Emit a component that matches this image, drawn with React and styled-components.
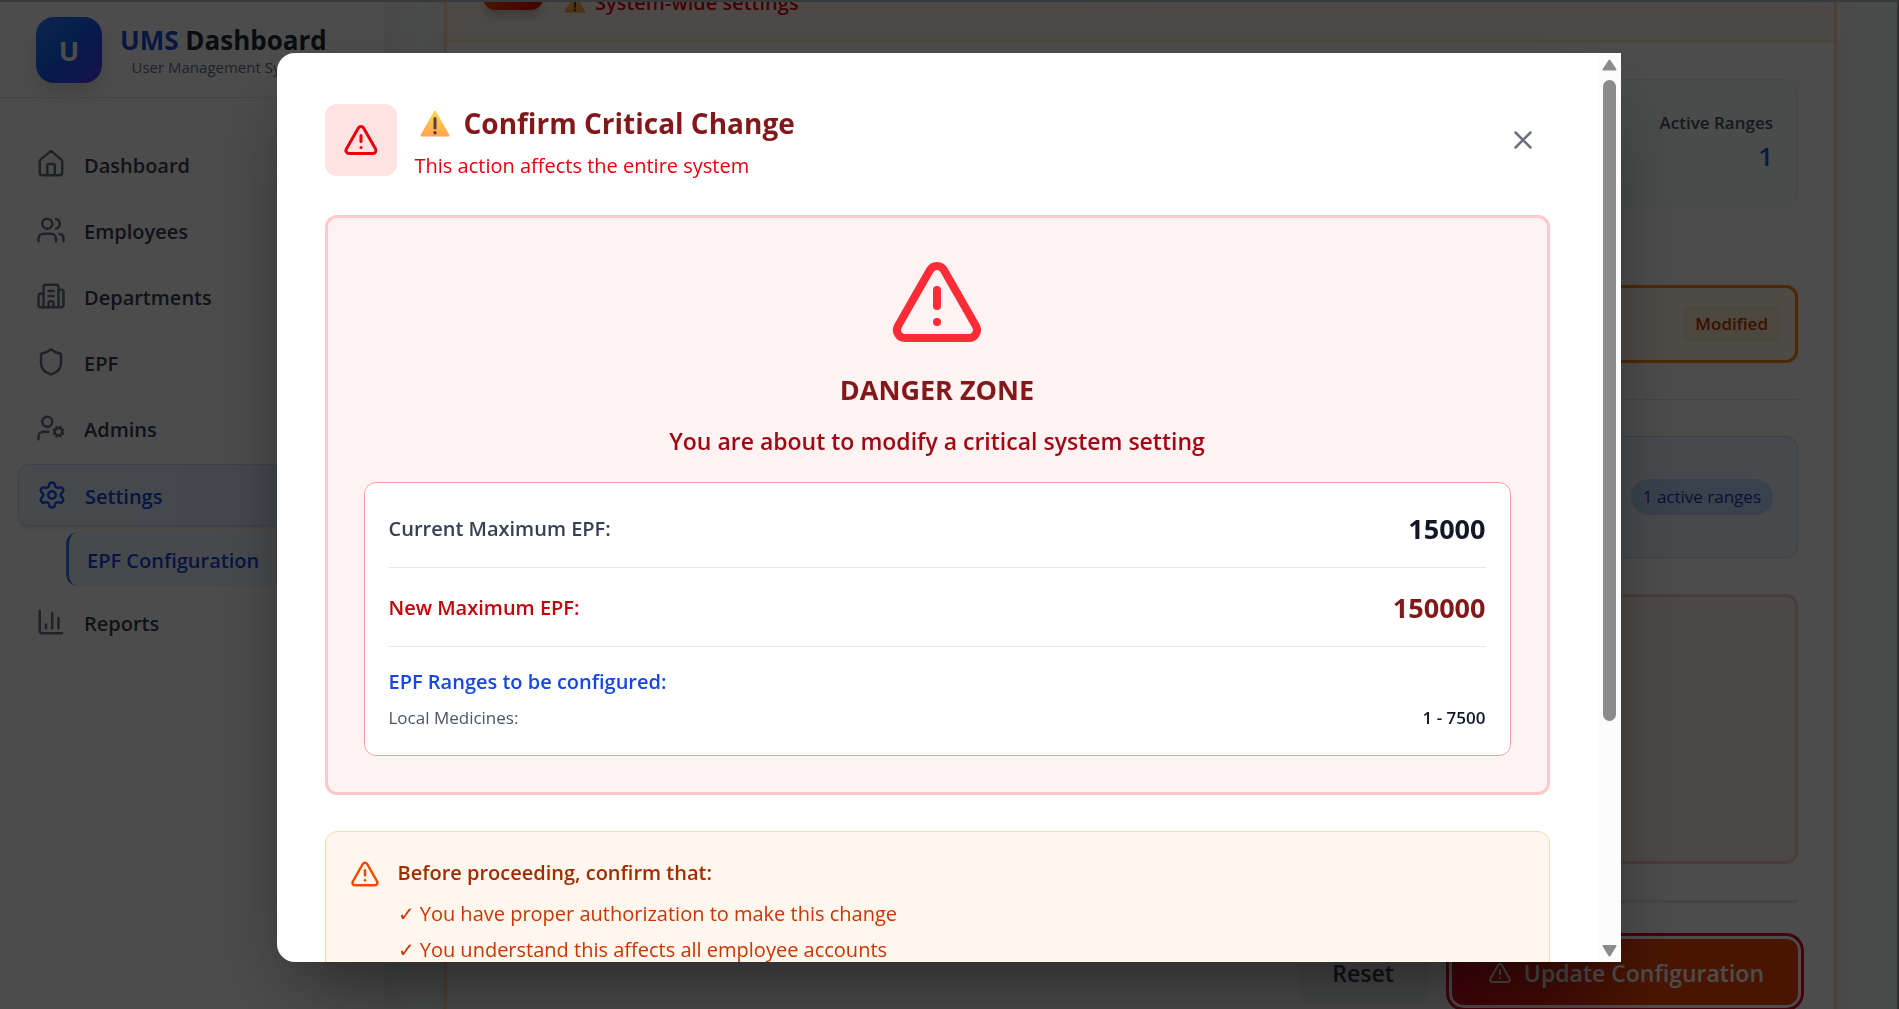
import React from "react";
import styled, { createGlobalStyle } from "styled-components";
import {
  House, Users, Building2, Shield, UserCog, Settings, ChartColumn, TriangleAlert, X,
} from "lucide-react";

const GlobalStyle = createGlobalStyle`
  *, *::before, *::after { box-sizing: border-box; }
  html, body, #root { height: 100%; }
  body { margin: 0; overflow: hidden; font-family: "Open Sans", "Noto Sans", sans-serif; color: #101828; }
  h1, h2, h3, p, ul, dl, dd { margin: 0; padding: 0; }
  button { font: inherit; border: 0; cursor: pointer; }
`;

const Page = styled.div`
  display: flex;
  height: 100vh;
  overflow: hidden;
  border-top: 2px solid #b9bfc6;
  border-right: 2px solid #a0a0a0;
  background: #f8fafc;
`;

const Sidebar = styled.aside`
  flex: 0 0 385px;
  background: #ffffff;
  border-right: 1px solid #eef1f5;
  box-shadow: 0 0 36px rgba(0, 0, 0, 0.08);
`;

const Brand = styled.header`
  display: flex;
  align-items: center;
  gap: 18px;
  height: 96px;
  padding: 0 36px 0;
  border-bottom: 1px solid #e2e8f0;
`;

const Logo = styled.div`
  display: grid;
  place-items: center;
  width: 66px;
  height: 66px;
  padding-top: 2px;
  border-radius: 18px;
  background: linear-gradient(135deg, #2b7fff, #155dfc 50%, #4f39f6);
  box-shadow: 0 12px 20px rgba(0, 0, 0, 0.12);
  color: #ffffff;
  font-size: 27px;
  font-weight: 700;
`;

const BrandText = styled.div`
  padding-top: 4px;
  text-align: center;
`;

const BrandName = styled.h1`
  font-size: 26px;
  line-height: 30px;
  font-weight: 700;
  color: #1e293b;
`;

const BrandAccent = styled.span`
  color: #1d4ed8;
`;

const BrandSub = styled.p`
  font-size: 15px;
  line-height: 24px;
  color: #62748e;
`;

const Nav = styled.nav`
  display: flex;
  flex-direction: column;
  gap: 6px;
  padding: 36px 18px;
`;

const NavLink = styled.a`
  display: flex;
  align-items: center;
  gap: 18px;
  height: ${(p) => (p.$active ? 62 : 60)}px;
  padding: 0 18px;
  border-radius: 12px;
  border: ${(p) => (p.$active ? "1px solid #bedbff" : "0")};
  background: ${(p) => (p.$active ? "linear-gradient(90deg, #eff6ff, #dbeafe)" : "none")};
  box-shadow: ${(p) => (p.$active ? "0 2px 4px rgba(0, 0, 0, 0.12)" : "none")};
  color: ${(p) => (p.$active ? "#1447e6" : "#364153")};
  font-size: 20px;
  font-weight: 600;
  text-decoration: none;

  svg {
    color: ${(p) => (p.$active ? "#155dfc" : "#6a7282")};
  }
`;

const NavLabel = styled.span`
  padding-top: 2px;
`;

const SubLink = styled.a`
  display: flex;
  align-items: center;
  height: 54px;
  margin-left: 48px;
  padding: 2px 18px 0;
  border-left: 3px solid #2b7fff;
  border-radius: 12px;
  background: #eff6ff;
  color: #1447e6;
  font-size: 20px;
  font-weight: 600;
  text-decoration: none;
`;

const Main = styled.main`
  flex: 1;
  padding: 0 60px 0 59px;
`;

const Card = styled.section`
  height: 1200px;
  border: solid #ffd6a7;
  border-width: 0 3px;
  background: #ffffff;
  box-shadow: 0 0 24px rgba(0, 0, 0, 0.05);
`;

const CardHead = styled.header`
  display: flex;
  align-items: flex-end;
  gap: 21px;
  height: 41px;
  padding: 0 36px 22px;
  border-bottom: 3px solid #fdecc4;
  background: linear-gradient(90deg, #fff7ed, #fef2f2);
`;

const HeadTile = styled.div`
  width: 60px;
  height: 14px;
  margin-bottom: 8px;
  border-radius: 0 0 12px 12px;
  background: linear-gradient(90deg, #f54900, #e7000b);
  box-shadow: 0 6px 10px rgba(0, 0, 0, 0.2);
`;

const HeadNote = styled.p`
  display: flex;
  align-items: center;
  gap: 9px;
  color: #e7000b;
  font-size: 20px;
  line-height: 30px;
  font-weight: 600;
`;

const CardBody = styled.div`
  display: flex;
  flex-direction: column;
  padding: 36px;
`;

const Stats = styled.div`
  display: flex;
  flex-direction: column;
  align-items: flex-end;
  height: 128px;
  padding: 28px 24px;
  border: 1px solid #e9eef0;
  border-radius: 12px;
  background: #f8fdfb;
`;

const StatLabel = styled.span`
  font-size: 17px;
  line-height: 30px;
  font-weight: 600;
  color: #4a5565;
`;

const StatValue = styled.strong`
  font-size: 26px;
  line-height: 36px;
  font-weight: 600;
  color: #155dfc;
`;

const ModifiedField = styled.div`
  display: flex;
  align-items: center;
  justify-content: flex-end;
  height: 78px;
  margin-top: 78px;
  padding: 0 15px;
  border: 3px solid #ff8904;
  border-radius: 12px;
  background: #fffbeb;
`;

const Badge = styled.span`
  padding: 0 12px;
  border-radius: 6px;
  background: #ffedd4;
  color: #ca3500;
  font-size: 17px;
  line-height: 36px;
  font-weight: 600;
`;

const Divider = styled.hr`
  width: 100%;
  height: ${(p) => p.$size}px;
  margin: 36px 0;
  border: 0;
  background: ${(p) => (p.$size > 1 ? "#e2e8f0" : "#e5e7eb")};
`;

const RangesPanel = styled.div`
  display: flex;
  justify-content: flex-end;
  height: 122px;
  padding: 42px 24px;
  border: 1px solid #bedbff;
  border-radius: 12px;
  background: #f0f5ff;
`;

const Pill = styled.span`
  height: 36px;
  padding: 0 12px;
  border-radius: 18px;
  background: #bedbff;
  color: #193cb8;
  font-size: 17px;
  line-height: 36px;
`;

const DangerPanel = styled.div`
  height: 270px;
  margin-top: 36px;
  border: 3px solid #ffc9c9;
  border-radius: 12px;
  background: #fef2f2;
`;

const Actions = styled.div`
  display: flex;
  justify-content: flex-end;
  gap: 24px;
`;

const ResetButton = styled.button`
  height: 66px;
  padding: 2px 34px 0;
  border-radius: 12px;
  background: #f3f4f6;
  color: #364153;
  font-size: 23px;
  font-weight: 600;
`;

const UpdateButton = styled.button`
  display: flex;
  align-items: center;
  gap: 12px;
  height: 66px;
  padding: 2px 34px 0 36px;
  border-radius: 12px;
  background: linear-gradient(90deg, #d90a24, #f54900 60%);
  box-shadow: 0 0 0 3px #ffffff, 0 0 0 6px #e7002b;
  color: #ffffff;
  font-size: 23px;
  font-weight: 600;
`;

const Overlay = styled.div`
  position: fixed;
  inset: 0;
  display: flex;
  justify-content: center;
  padding: 53px 26px 47px 24px;
  background: rgba(0, 0, 0, 0.7);
`;

const Dialog = styled.div`
  display: flex;
  width: 100%;
  max-width: 1344px;
  overflow: hidden;
  border-radius: 18px 0 0 18px;
  background: #ffffff;
  box-shadow: 0 38px 75px -18px rgba(0, 0, 0, 0.5);
`;

const DialogScroll = styled.div`
  flex: 1;
  display: flex;
  flex-direction: column;
  gap: 36px;
  padding: 48px;
  overflow-y: auto;
  scrollbar-width: none;
`;

const ScrollTrack = styled.div`
  display: flex;
  flex-direction: column;
  align-items: center;
  width: 23px;
  padding: 6px 0 5px;
  background: #fcfcfc;
`;

const ScrollThumb = styled.div`
  flex: 0 1 641px;
  width: 13px;
  margin: 9px 0 auto;
  border-radius: 7px;
  background: #8b8b8b;
`;

const DialogHead = styled.header`
  display: flex;
  align-items: center;
  gap: 18px;
  height: 78px;
`;

const AlertTile = styled.div`
  display: grid;
  place-items: center;
  width: 72px;
  height: 72px;
  border-radius: 12px;
  background: #ffe2e2;
  color: #e7000b;
`;

const HeadText = styled.div`
  flex: 1;
`;

const DialogTitle = styled.h2`
  display: flex;
  align-items: center;
  gap: 14px;
  padding-left: 5px;
  color: #82181a;
  font-size: 28px;
  line-height: 52px;
  font-weight: 700;
`;

const DialogSub = styled.p`
  color: #e7000b;
  font-size: 20px;
  line-height: 34px;
`;

const CloseButton = styled.button`
  display: grid;
  place-items: center;
  width: 54px;
  height: 54px;
  padding: 0;
  border-radius: 12px;
  background: none;
  color: #6a7282;
`;

const DangerZone = styled.section`
  flex-shrink: 0;
  display: flex;
  flex-direction: column;
  align-items: center;
  padding: 36px;
  border: 3px solid #ffc9c9;
  border-radius: 12px;
  background: #fef2f2;
  color: #fb2c36;
`;

const ZoneTitle = styled.h3`
  margin-top: 19px;
  color: #82181a;
  font-size: 27px;
  line-height: 42px;
  font-weight: 700;
`;

const ZoneText = styled.p`
  margin: 12px 0 23px;
  color: #9f0712;
  font-size: 23px;
  line-height: 36px;
  font-weight: 600;
`;

const Summary = styled.dl`
  align-self: stretch;
  padding: 24px;
  border: 1px solid #ffa2a2;
  border-radius: 12px;
  background: #ffffff;
`;

const SummaryRow = styled.div`
  display: flex;
  align-items: center;
  justify-content: space-between;
  height: ${(p) => (p.$first ? 61 : 79)}px;
  padding: ${(p) => (p.$first ? 2 : 20)}px 0 18px;
  border-bottom: 1px solid #e5e7eb;
`;

const RowLabel = styled.dt`
  color: ${(p) => p.$color};
  font-size: 20px;
  line-height: 30px;
  font-weight: 600;
`;

const RowValue = styled.dd`
  color: ${(p) => p.$color};
  font-size: 27px;
  line-height: 40px;
  font-weight: 700;
`;

const Ranges = styled.div`
  display: flex;
  flex-direction: column;
  gap: 8px;
  padding-top: 20px;
`;

const RangeRow = styled.div`
  display: flex;
  justify-content: space-between;
  font-size: 17px;
  line-height: 26px;
`;

const RangeName = styled.dt`
  color: #4a5565;
`;

const RangeValue = styled.dd`
  color: #101828;
  font-weight: 600;
`;

const Checklist = styled.section`
  flex-shrink: 0;
  display: flex;
  align-items: flex-start;
  gap: 18px;
  padding: 24px;
  border: 1px solid #ffd6a7;
  border-radius: 12px;
  background: #fff7ed;
  color: #f54900;

  > svg {
    margin-top: 3px;
  }
`;

const CheckTitle = styled.h3`
  color: #9f2d00;
  font-size: 20px;
  line-height: 33px;
  font-weight: 600;
`;

const CheckItems = styled.ul`
  display: flex;
  flex-direction: column;
  gap: 6px;
  margin-top: 10px;
  color: #ca3500;
  font-size: 20px;
  line-height: 30px;
  list-style: none;
`;

const navItems = [
  { label: "Dashboard", icon: House },
  { label: "Employees", icon: Users },
  { label: "Departments", icon: Building2 },
  { label: "EPF", icon: Shield },
  { label: "Admins", icon: UserCog },
  { label: "Settings", icon: Settings, active: true, child: "EPF Configuration" },
  { label: "Reports", icon: ChartColumn },
];

function WarningSign({ size }) {
  return (
    <svg width={size} height={size} viewBox="0 0 30 30" aria-hidden="true">
      <defs>
        <linearGradient id={`sign${size}`} x1="0" y1="0" x2="0" y2="1">
          <stop offset="0" stopColor="#ffd84a" />
          <stop offset="1" stopColor="#ffa450" />
        </linearGradient>
      </defs>
      <path
        d="M14.1 3.2Q15 1.8 15.9 3.2L29.4 27Q29.8 28.4 28.6 28.4H1.4Q.2 28.4.6 27Z"
        fill={`url(#sign${size})`}
      />
      <path d="M15 10.500V20" stroke="#504446" strokeWidth="3" strokeLinecap="round" />
      <circle cx="15" cy="24.700" r="1.800" fill="#504446" />
    </svg>
  );
}

function Arrow({ down }) {
  return (
    <svg width="15" height="12" viewBox="0 0 15 12" aria-hidden="true">
      <path
        d={down ? "M1.500 1h12L7.500 10.500Z" : "M7.500 1.500L13.500 10.500H1.500Z"}
        fill="#8b8b8b" stroke="#8b8b8b" strokeWidth="2" strokeLinejoin="round"
      />
    </svg>
  );
}

export default function App() {
  return (
    <>
      <GlobalStyle />
      <Page>
        <Sidebar>
          <Brand>
            <Logo>U</Logo>
            <BrandText>
              <BrandName><BrandAccent>UMS</BrandAccent> Dashboard</BrandName>
              <BrandSub>User Management System</BrandSub>
            </BrandText>
          </Brand>
          <Nav>
            {navItems.map(({ label, icon: Icon, active, child }) => (
              <React.Fragment key={label}>
                <NavLink href="#" $active={active}>
                  <Icon size={30} />
                  <NavLabel>{label}</NavLabel>
                </NavLink>
                {child && <SubLink href="#">{child}</SubLink>}
              </React.Fragment>
            ))}
          </Nav>
        </Sidebar>
        <Main>
          <Card>
            <CardHead>
              <HeadTile />
              <HeadNote><WarningSign size={22} />System-wide settings</HeadNote>
            </CardHead>
            <CardBody>
              <Stats>
                <StatLabel>Active Ranges</StatLabel>
                <StatValue>1</StatValue>
              </Stats>
              <ModifiedField><Badge>Modified</Badge></ModifiedField>
              <Divider $size={1} />
              <RangesPanel><Pill>1 active ranges</Pill></RangesPanel>
              <DangerPanel />
              <Divider $size={3} />
              <Actions>
                <ResetButton type="button">Reset</ResetButton>
                <UpdateButton type="button"><TriangleAlert size={24} />Update Configuration</UpdateButton>
              </Actions>
            </CardBody>
          </Card>
        </Main>
      </Page>
      <Overlay>
        <Dialog role="dialog" aria-modal="true" aria-labelledby="confirm-title">
          <DialogScroll>
            <DialogHead>
              <AlertTile><TriangleAlert size={36} /></AlertTile>
              <HeadText>
                <DialogTitle id="confirm-title"><WarningSign size={30} />Confirm Critical Change</DialogTitle>
                <DialogSub>This action affects the entire system</DialogSub>
              </HeadText>
              <CloseButton type="button" aria-label="Close"><X size={30} /></CloseButton>
            </DialogHead>
            <DangerZone>
              <TriangleAlert size={96} />
              <ZoneTitle>DANGER ZONE</ZoneTitle>
              <ZoneText>You are about to modify a critical system setting</ZoneText>
              <Summary>
                <SummaryRow $first>
                  <RowLabel $color="#364153">Current Maximum EPF:</RowLabel>
                  <RowValue $color="#101828">15000</RowValue>
                </SummaryRow>
                <SummaryRow>
                  <RowLabel $color="#c10007">New Maximum EPF:</RowLabel>
                  <RowValue $color="#82181a">150000</RowValue>
                </SummaryRow>
                <Ranges>
                  <RowLabel $color="#1447e6">EPF Ranges to be configured:</RowLabel>
                  <RangeRow>
                    <RangeName>Local Medicines:</RangeName>
                    <RangeValue>1 - 7500</RangeValue>
                  </RangeRow>
                </Ranges>
              </Summary>
            </DangerZone>
            <Checklist>
              <TriangleAlert size={30} />
              <div>
                <CheckTitle>Before proceeding, confirm that:</CheckTitle>
                <CheckItems>
                  <li>✓ You have proper authorization to make this change</li>
                  <li>✓ You understand this affects all employee accounts</li>
                </CheckItems>
              </div>
            </Checklist>
          </DialogScroll>
          <ScrollTrack aria-hidden="true">
            <Arrow />
            <ScrollThumb />
            <Arrow down />
          </ScrollTrack>
        </Dialog>
      </Overlay>
    </>
  );
}
